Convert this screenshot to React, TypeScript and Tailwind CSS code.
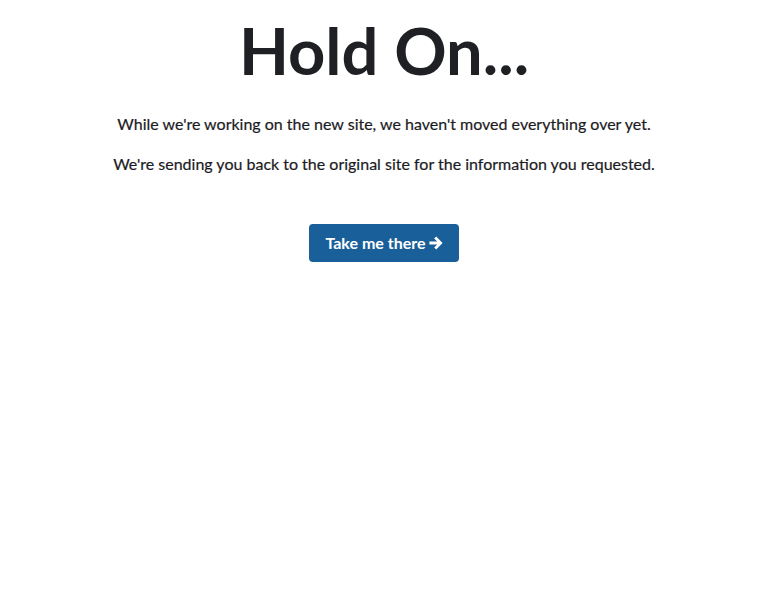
export default function App() {
  return (
    <div className="min-h-[596px] bg-white text-center text-[#1c1c1f]" style={{ fontFamily: "Lato, 'Open Sans', sans-serif" }}>
      <h1 className="pt-[10px] text-[65px] font-bold leading-[80px] text-[#1f2024]">Hold On...</h1>
      <p className="mt-[22px] text-[16px] leading-[24px] [-webkit-text-stroke:0.2px_#1c1c1f]">While we're working on the new site, we haven't moved everything over yet.</p>
      <p className="mt-[16px] text-[16px] leading-[24px] [-webkit-text-stroke:0.2px_#1c1c1f]">We're sending you back to the original site for the information you requested.</p>
      <div className="mt-[48px] flex justify-center">
        <button className="flex h-[38px] w-[150px] items-center justify-center gap-[3px] rounded-[4px] bg-[#195f99] text-[16px] font-bold text-white">
          Take me there
          <svg width="14" height="14" viewBox="0 0 14 14" fill="currentColor">
            <path d="M7.2 0.6 L13.6 7 L7.2 13.4 L5.2 11.4 L8.2 8.6 L0.4 8.6 L0.4 5.4 L8.2 5.4 L5.2 2.6 Z" />
          </svg>
        </button>
      </div>
    </div>
  );
}
